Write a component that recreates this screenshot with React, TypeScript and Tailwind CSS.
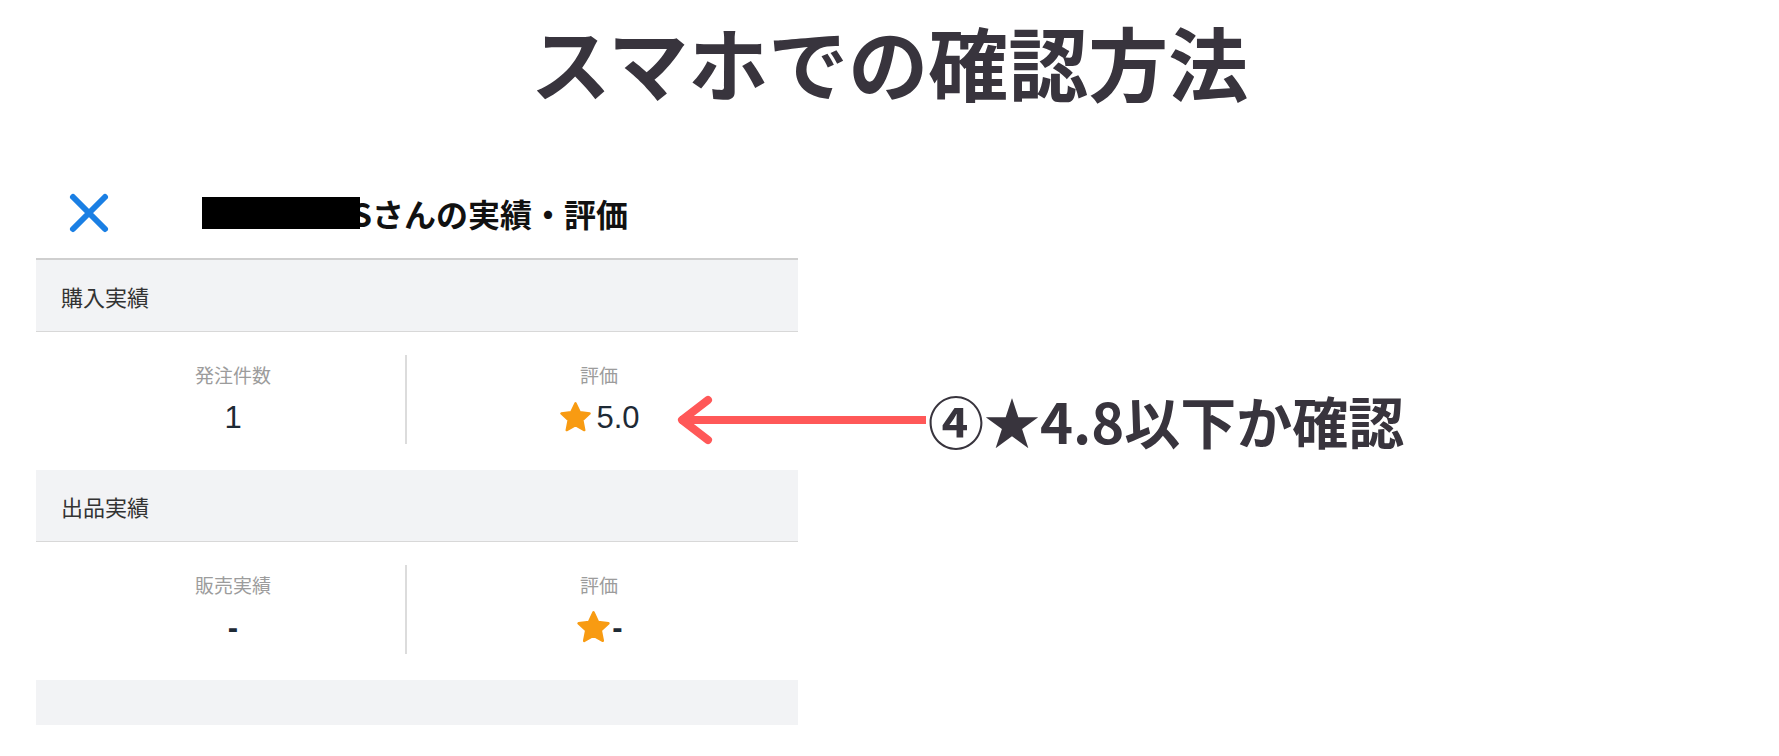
import React from "react";

const jp = "font-['Noto_Sans_CJK_JP',sans-serif]";
const num = "font-['Liberation_Sans','Noto_Sans_CJK_JP',sans-serif]";

function Star({ size }: { size: number }) {
  return (
    <svg width={size} height={size} viewBox="0 0 24 24">
      <path
        d="M12 2.2l2.95 6.2 6.75.85-4.95 4.65 1.3 6.75L12 17.35l-6.05 3.3 1.3-6.75L2.3 9.25l6.75-.85z"
        fill="#f89b12"
        stroke="#f89b12"
        strokeWidth="1.6"
        strokeLinejoin="round"
      />
    </svg>
  );
}

function SectionHead({ label }: { label: string }) {
  return (
    <div className="flex h-[72px] items-center border-b border-[#d8d8d8] bg-[#f2f3f5] pl-[25px]">
      <span className="text-[22px] leading-none text-[#333]">{label}</span>
    </div>
  );
}

function StatRow({ left, right }: { left: [string, React.ReactNode]; right: [string, React.ReactNode] }) {
  return (
    <div className="flex h-[138px] items-start pt-[23px]">
      <div className="flex h-[89px] w-[371px] flex-col items-center border-r-2 border-[#dcdcdc] pl-[25px] pt-[8px]">
        <span className="text-[19px] leading-[24px] text-[#9c9c9c]">{left[0]}</span>
        <div className="mt-[12px] flex h-[36px] items-center text-[31px] leading-none text-[#1e2a35]">{left[1]}</div>
      </div>
      <div className="flex h-[89px] flex-1 flex-col items-center pr-[7px] pt-[8px]">
        <span className="text-[19px] leading-[24px] text-[#9c9c9c]">{right[0]}</span>
        <div className="mt-[12px] flex h-[36px] items-center text-[31px] leading-none text-[#1e2a35]">{right[1]}</div>
      </div>
    </div>
  );
}

export default function App() {
  return (
    <div className={`relative h-[756px] w-[1779px] overflow-hidden bg-white ${jp}`}>
      <h1 className="pt-[20px] text-center text-[80px] font-bold leading-[80px] text-[#38343d]">
        スマホでの確認方法
      </h1>

      <div className="ml-[36px] mt-[68px] w-[762px]">
        <div className="flex h-[92px] items-center border-b-2 border-[#cfcfcf] pl-[32px]">
          <svg width="42" height="42" viewBox="0 0 42 42">
            <path d="M5 5L37 37M37 5L5 37" stroke="#1a7fe4" strokeWidth="6" strokeLinecap="round" />
          </svg>
          <div className="ml-[92px] flex items-center">
            <div className="relative z-10 h-[32px] w-[158px] bg-black" />
            <span className="-ml-[8px] text-[32px] font-bold leading-none text-[#111]">
              Sさんの実績・評価
            </span>
          </div>
        </div>

        <SectionHead label="購入実績" />
        <StatRow
          left={["発注件数", <span className={num}>1</span>]}
          right={[
            "評価",
            <span className="flex items-center gap-[3px]">
              <Star size={35} />
              <span className={num}>5.0</span>
            </span>,
          ]}
        />

        <SectionHead label="出品実績" />
        <StatRow
          left={["販売実績", <span className={`${num} font-bold`}>-</span>]}
          right={[
            "評価",
            <span className="flex items-center">
              <Star size={37} />
              <span className={`${num} font-bold`}>-</span>
            </span>,
          ]}
        />

        <div className="h-[45px] bg-[#f2f3f5]" />
      </div>

      <div className="absolute left-[674px] top-[392px] flex items-center">
        <svg width="254" height="54" viewBox="0 0 254 54">
          <path d="M6 27H252" stroke="#ff5858" strokeWidth="8" />
          <path d="M34 7L8 27L34 47" fill="none" stroke="#ff5858" strokeWidth="8" strokeLinecap="round" strokeLinejoin="round" />
        </svg>
        <span className="text-[56px] font-bold leading-none text-[#38343d]">④★4.8以下か確認</span>
      </div>
    </div>
  );
}
